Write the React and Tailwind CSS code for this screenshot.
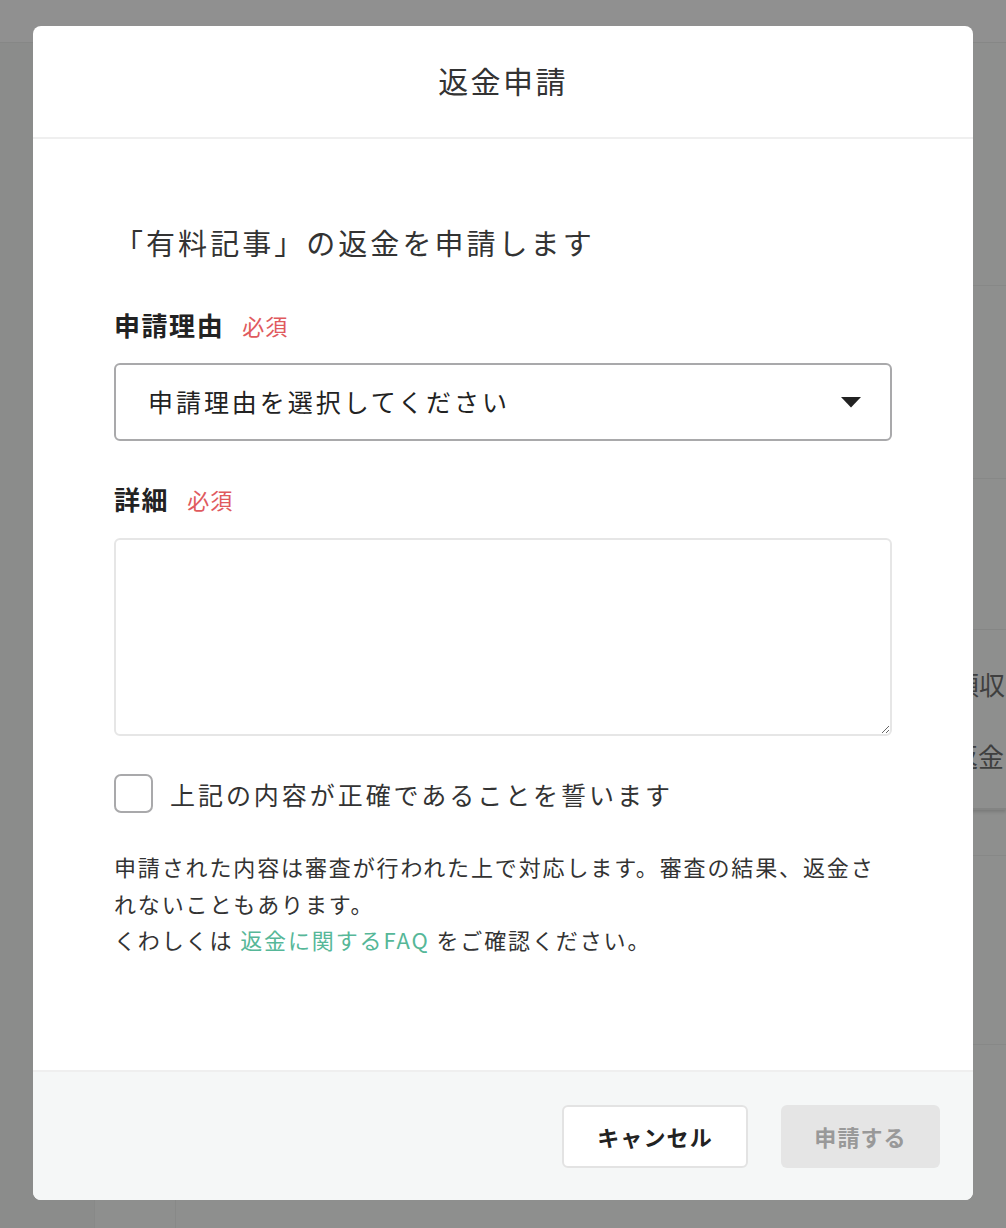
import React from "react";

const font = { fontFamily: '"Noto Sans CJK JP", "Noto Sans", sans-serif' };

function Background() {
  return (
    <div className="flex h-[1228px] w-[1006px] flex-col bg-[#8e8f8e]">
      <div className="h-[43px] shrink-0 border-b border-[#868786] bg-[#909090]" />
      <div className="flex flex-1">
        <div className="w-[95px] shrink-0 border-r border-[#888988] bg-[#8b8c8b]" />
        <div className="w-[81px] shrink-0 border-r border-[#888988]" />
        <div className="flex-1" />
        <div className="flex w-[76px] shrink-0 flex-col overflow-hidden">
          <div className="h-[243px] border-b border-[#878887]" />
          <div className="h-[193px] border-b border-[#878887]" />
          <div className="h-[151px] border-b border-[#878887]" />
          <div className="flex h-[180px] flex-col gap-[36px] border-b-2 border-[#838483] pt-[36px] text-[26px] leading-[36px] text-[#3f3f3f] shadow-[0_2px_3px_rgba(0,0,0,0.15)]">
            <span className="ml-[23px] whitespace-nowrap">領収書</span>
            <span className="ml-[22px] whitespace-nowrap">返金</span>
          </div>
          <div className="h-[46px] border-b border-[#878887]" />
          <div className="h-[189px] border-b border-[#878887]" />
          <div className="flex-1" />
        </div>
      </div>
    </div>
  );
}

function Required() {
  return (
    <span className="ml-[18px] text-[22px] font-normal tracking-[0.05em] text-[#e05a5e]">
      必須
    </span>
  );
}

export default function App() {
  return (
    <div className="relative h-[1228px] w-[1006px] overflow-hidden" style={font}>
      <Background />
      <div className="absolute inset-0 flex justify-center pt-[26px]">
        <div className="flex h-[1174px] w-[940px] flex-col overflow-hidden rounded-[8px] bg-white">
          <div className="flex h-[113px] shrink-0 items-center justify-center border-b-2 border-[#efefef] pb-[2px] text-[30px] tracking-[0.08em] text-[#333]">
            返金申請
          </div>
          <div className="flex flex-1 flex-col px-[81px] pt-[83px]">
            <div className="text-[29px] leading-[40px] tracking-[0.105em] text-[#333]">
              「有料記事」の返金を申請します
            </div>
            <div className="mt-[45px] flex items-center text-[26px] font-bold leading-[36px] tracking-[0.06em] text-[#222]">
              申請理由
              <Required />
            </div>
            <div className="mt-[20px] flex h-[78px] items-center justify-between rounded-[6px] border-2 border-[#a9a9ab] pl-[32px] pr-[29px] text-[25px] tracking-[0.118em] text-[#222]">
              <span>申請理由を選択してください</span>
              <svg width="20" height="11" viewBox="0 0 20 11">
                <path d="M0 0 L20 0 L10 10.5 Z" fill="#222" />
              </svg>
            </div>
            <div className="mt-[40px] flex items-center text-[26px] font-bold leading-[36px] tracking-[0.06em] text-[#222]">
              詳細
              <Required />
            </div>
            <textarea className="mt-[21px] block h-[198px] w-full rounded-[6px] border-2 border-[#e6e6e6] bg-white p-3 text-[22px] outline-none" />
            <div className="mt-[38px] flex items-center gap-[17px]">
              <span className="block h-[39px] w-[39px] shrink-0 rounded-[7px] border-2 border-[#a9a9ab] bg-white" />
              <span className="text-[25px] leading-[36px] tracking-[0.118em] text-[#333]">
                上記の内容が正確であることを誓います
              </span>
            </div>
            <p className="mt-[35px] text-[22px] leading-[36.5px] tracking-[0.085em] text-[#333]">
              申請された内容は審査が行われた上で対応します。審査の結果、返金されないこともあります。
              <br />
              くわしくは <span className="text-[#56b798]">返金に関するFAQ</span> をご確認ください。
            </p>
          </div>
          <div className="flex h-[130px] shrink-0 items-center justify-end gap-[33px] border-t-2 border-[#efefef] bg-[#f5f7f7] pr-[33px]">
            <button className="flex h-[63px] w-[186px] items-center justify-center rounded-[6px] border-2 border-[#e3e3e3] bg-white text-[22px] font-bold tracking-[0.05em] text-[#222]">
              キャンセル
            </button>
            <button className="flex h-[63px] w-[159px] items-center justify-center rounded-[6px] bg-[#e5e5e5] text-[22px] font-bold tracking-[0.05em] text-[#999]">
              申請する
            </button>
          </div>
        </div>
      </div>
    </div>
  );
}
